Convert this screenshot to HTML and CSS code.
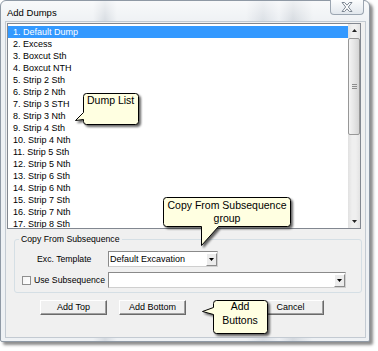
FILE: index.html
```html
<!DOCTYPE html>
<html lang="en">

<head>
    <meta charset="UTF-8">
    <meta name="viewport" content="width=device-width, initial-scale=1.0">
    <title>Add Dumps</title>
    <link rel="stylesheet" href="styles.css">
</head>

<body>
    <div class="page-container">
        <div class="dialog-window">
            <!-- Title bar -->
            <div class="title-bar">
                <div class="title">Add Dumps</div>
                <div class="close-button">
                    <svg xmlns="http://www.w3.org/2000/svg" width="12" height="10" viewBox="0 0 12 10">
                        <polygon points="1,0.5 3.6,0.5 6,3.2 8.4,0.5 11,0.5 7.3,5 11,9.5 8.4,9.5 6,6.8 3.6,9.5 1,9.5 4.7,5"
                            fill="#ffffff" stroke="#7d8793" stroke-width="1" stroke-linejoin="round" />
                    </svg>
                </div>
            </div>

            <div class="client-area">
                <!-- Dump list -->
                <div class="list-box">
                    <div class="list-items">
                        <div class="list-item selected">1. Default Dump</div>
                        <div class="list-item">2. Excess</div>
                        <div class="list-item">3. Boxcut Sth</div>
                        <div class="list-item">4. Boxcut NTH</div>
                        <div class="list-item">5. Strip 2 Sth</div>
                        <div class="list-item">6. Strip 2 Nth</div>
                        <div class="list-item">7. Strip 3 STH</div>
                        <div class="list-item">8. Strip 3 Nth</div>
                        <div class="list-item">9. Strip 4 Sth</div>
                        <div class="list-item">10. Strip 4 Nth</div>
                        <div class="list-item">11. Strip 5 Sth</div>
                        <div class="list-item">12. Strip 5 Nth</div>
                        <div class="list-item">13. Strip 6 Sth</div>
                        <div class="list-item">14. Strip 6 Nth</div>
                        <div class="list-item">15. Strip 7 Sth</div>
                        <div class="list-item">16. Strip 7 Nth</div>
                        <div class="list-item">17. Strip 8 Sth</div>
                    </div>
                    <div class="scroll-bar">
                        <div class="scroll-arrow">
                            <svg xmlns="http://www.w3.org/2000/svg" width="5" height="3" viewBox="0 0 5 3">
                                <polygon points="0,3 2.5,0 5,3" fill="#222" />
                            </svg>
                        </div>
                        <div class="scroll-thumb"><span class="thumb-grip"></span></div>
                        <div class="scroll-track"></div>
                        <div class="scroll-arrow">
                            <svg xmlns="http://www.w3.org/2000/svg" width="5" height="3" viewBox="0 0 5 3">
                                <polygon points="0,0 5,0 2.5,3" fill="#222" />
                            </svg>
                        </div>
                    </div>
                </div>

                <!-- Copy From Subsequence -->
                <div class="group-box">
                    <div class="group-title">Copy From Subsequence</div>
                    <div class="group-row first-row">
                        <span class="field-label">Exc. Template</span>
                        <div class="combo-box template-combo">
                            <span class="combo-text">Default Excavation</span>
                            <span class="combo-button">
                                <svg xmlns="http://www.w3.org/2000/svg" width="5" height="3" viewBox="0 0 5 3">
                                    <polygon points="0,0 5,0 2.5,3" fill="#000" />
                                </svg>
                            </span>
                        </div>
                    </div>
                    <div class="group-row">
                        <span class="check-box"></span>
                        <span class="check-label">Use Subsequence</span>
                        <div class="combo-box subsequence-combo">
                            <span class="combo-text"></span>
                            <span class="combo-button">
                                <svg xmlns="http://www.w3.org/2000/svg" width="5" height="3" viewBox="0 0 5 3">
                                    <polygon points="0,0 5,0 2.5,3" fill="#000" />
                                </svg>
                            </span>
                        </div>
                    </div>
                </div>

                <!-- Buttons -->
                <div class="button-row">
                    <div class="push-button">Add Top</div>
                    <div class="push-button">Add Bottom</div>
                    <div class="push-button cancel-button">Cancel</div>
                </div>
            </div>
        </div>

        <!-- Callouts -->
        <div class="callout callout-list">
            <svg xmlns="http://www.w3.org/2000/svg" width="70" height="38" viewBox="0 0 70 38">
                <path d="M12.5,1.5 H61.5 Q64.5,1.5 64.5,4.5 V29.5 Q64.5,32.5 61.5,32.5 H12.5 Q9.5,32.5 9.5,29.5 V27.5 L1.5,28.5 L9.5,20.5 V4.5 Q9.5,1.5 12.5,1.5 Z"
                    fill="#ffffe1" stroke="#000" stroke-width="1" />
            </svg>
            <div class="callout-text">Dump List</div>
        </div>

        <div class="callout callout-group">
            <svg xmlns="http://www.w3.org/2000/svg" width="136" height="54" viewBox="0 0 136 54">
                <path d="M6.5,3.5 H127.5 Q130.5,3.5 130.5,6.5 V29.5 Q130.5,32.5 127.5,32.5 H58.5 L41.5,51.5 V32.5 H6.5 Q3.5,32.5 3.5,29.5 V6.5 Q3.5,3.5 6.5,3.5 Z"
                    fill="#ffffe1" stroke="#000" stroke-width="1" />
            </svg>
            <div class="callout-text">Copy From Subsequence<br>group</div>
        </div>

        <div class="callout callout-buttons">
            <svg xmlns="http://www.w3.org/2000/svg" width="74" height="42" viewBox="0 0 74 42">
                <path d="M18.5,3.5 H66.5 Q69.5,3.5 69.5,6.5 V33.5 Q69.5,36.5 66.5,36.5 H18.5 Q15.5,36.5 15.5,33.5 V17.5 L4.5,14.5 L15.5,10.5 V6.5 Q15.5,3.5 18.5,3.5 Z"
                    fill="#ffffe1" stroke="#000" stroke-width="1" />
            </svg>
            <div class="callout-text">Add<br>Buttons</div>
        </div>
    </div>
</body>

</html>
```

FILE: styles.css
```css
/* Base */
body {
    margin: 0;
    background-color: #ffffff;
    font-family: 'Liberation Sans', Arial, sans-serif;
    color: #000;
}

.page-container {
    position: relative;
    width: 378px;
    height: 351px;
}

/* Window frame */
.dialog-window {
    width: 370px;
    height: 342px;
    box-sizing: border-box;
    border: 1px solid #8f99a5;
    border-radius: 6px 6px 2px 2px;
    padding: 0 4px 4px 5px;
    display: flex;
    flex-direction: column;
    background-color: #e8ecf0;
    background-image:
        linear-gradient(180deg, rgba(255, 255, 255, 0.6) 0, rgba(255, 255, 255, 0) 22px),
        linear-gradient(90deg, #eef1f4 0, #eef1f4 92px, #d6dbe1 104px, #eef1f4 116px, #eef1f4 245px, #d9dee4 262px, #eceff3 278px, #d4d9df 292px, #eef1f4 312px);
    box-shadow: 3px 3px 3px rgba(0, 0, 0, 0.45);
}

/* Title bar */
.title-bar {
    height: 21px;
    display: flex;
    justify-content: space-between;
    align-items: flex-start;
}

.title {
    font-size: 9.5px;
    line-height: 11px;
    margin-top: 6px;
    padding-left: 1px;
}

.close-button {
    width: 34px;
    height: 15px;
    margin-top: -1px;
    margin-right: 1px;
    box-sizing: border-box;
    border: 1px solid #9ba5b1;
    border-top: none;
    border-radius: 0 0 4px 4px;
    background: linear-gradient(180deg, #fbfcfd, #e2e7ed);
    display: flex;
    justify-content: center;
    align-items: center;
}

/* Client area */
.client-area {
    flex: 1;
    background-color: #f0f0f0;
    box-shadow: 0 0 0 1px #c3cad2;
    padding: 1px 0 0 1px;
    display: flex;
    flex-direction: column;
}

/* List box */
.list-box {
    width: 354px;
    height: 206px;
    box-sizing: border-box;
    border: 1px solid #828790;
    background-color: #fff;
    display: flex;
    overflow: hidden;
}

.list-items {
    width: 340px;
    padding-top: 2px;
    font-size: 9px;
}

.list-item {
    height: 12px;
    line-height: 12px;
    padding-left: 5px;
    white-space: nowrap;
}

.list-item.selected {
    background-color: #3399ff;
    color: #fff;
}

/* Scroll bar */
.scroll-bar {
    width: 12px;
    display: flex;
    flex-direction: column;
    background: linear-gradient(90deg, #e1e1e1 0, #efefef 35%, #efefef 65%, #e3e3e3 100%);
}

.scroll-arrow {
    height: 13px;
    display: flex;
    justify-content: center;
    align-items: center;
}

.scroll-thumb {
    height: 97px;
    margin-top: 1px;
    box-sizing: border-box;
    border: 1px solid #979797;
    border-radius: 2px;
    background: linear-gradient(90deg, #f4f4f4, #e6e6e6 50%, #d5d5d5);
    display: flex;
    justify-content: center;
    align-items: center;
}

.thumb-grip {
    width: 5px;
    height: 5px;
    background: repeating-linear-gradient(180deg, #8d8d8d 0, #8d8d8d 1px, transparent 1px, transparent 2px);
}

.scroll-track {
    flex: 1;
}

/* Group box */
.group-box {
    width: 348px;
    margin: 10px 0 0 7px;
    box-sizing: border-box;
    border: 1px solid #d5dfe5;
    border-radius: 3px;
    padding-bottom: 4px;
    display: flex;
    flex-direction: column;
    font-size: 8.7px;
}

.group-title {
    align-self: flex-start;
    margin: -6px 0 0 4px;
    padding: 0 2px;
    line-height: 11px;
    background-color: #f0f0f0;
}

.group-row {
    height: 16px;
    margin-top: 5px;
    display: flex;
    align-items: center;
}

.group-row.first-row {
    margin-top: 6px;
}

.field-label {
    width: 71px;
    margin-left: 22px;
    white-space: nowrap;
}

.check-box {
    width: 9px;
    height: 9px;
    margin-left: 7px;
    box-sizing: border-box;
    border: 1px solid #8f8f8f;
    background: linear-gradient(135deg, #f4f4f4, #ffffff);
}

.check-label {
    width: 74px;
    margin-left: 3px;
    white-space: nowrap;
}

/* Combo boxes */
.combo-box {
    height: 16px;
    box-sizing: border-box;
    border: 1px solid;
    border-color: #8a8a8a #cfcfcf #cfcfcf #8a8a8a;
    background-color: #fff;
    padding-left: 1px;
    display: flex;
    align-items: center;
    font-size: 9px;
}

.template-combo {
    width: 110px;
}

.subsequence-combo {
    width: 238px;
}

.combo-text {
    flex: 1;
    white-space: nowrap;
}

.combo-button {
    width: 11px;
    height: 13px;
    box-sizing: border-box;
    border: 1px solid;
    border-color: #fff #8a8a8a #8a8a8a #fff;
    background-color: #ececec;
    display: flex;
    justify-content: center;
    align-items: center;
}

/* Buttons */
.button-row {
    margin-top: 7px;
    padding-left: 33px;
    display: flex;
    gap: 12px;
}

.push-button {
    width: 67px;
    height: 15px;
    box-sizing: border-box;
    border: 1px solid;
    border-color: #ffffff #6a6a6a #6a6a6a #ffffff;
    box-shadow: inset -1px -1px 0 #a0a0a0;
    background-color: #f0f0f0;
    font-size: 9px;
    line-height: 13px;
    text-align: center;
}

.cancel-button {
    margin-left: 59px;
}

/* Callouts */
.callout {
    position: absolute;
}

.callout svg {
    display: block;
    filter: drop-shadow(2px 2px 1px rgba(0, 0, 0, 0.6));
}

.callout-text {
    position: absolute;
    font-size: 10.5px;
    line-height: 13px;
    text-align: center;
    white-space: nowrap;
}

.callout-list {
    left: 74px;
    top: 92px;
}

.callout-list .callout-text {
    left: 13px;
    top: 2px;
    line-height: 12px;
}

.callout-group {
    left: 160px;
    top: 194px;
}

.callout-group .callout-text {
    left: 3px;
    width: 128px;
    top: 5px;
}

.callout-buttons {
    left: 198px;
    top: 297px;
}

.callout-buttons .callout-text {
    left: 15px;
    width: 54px;
    top: 3px;
    line-height: 13.5px;
}
```
